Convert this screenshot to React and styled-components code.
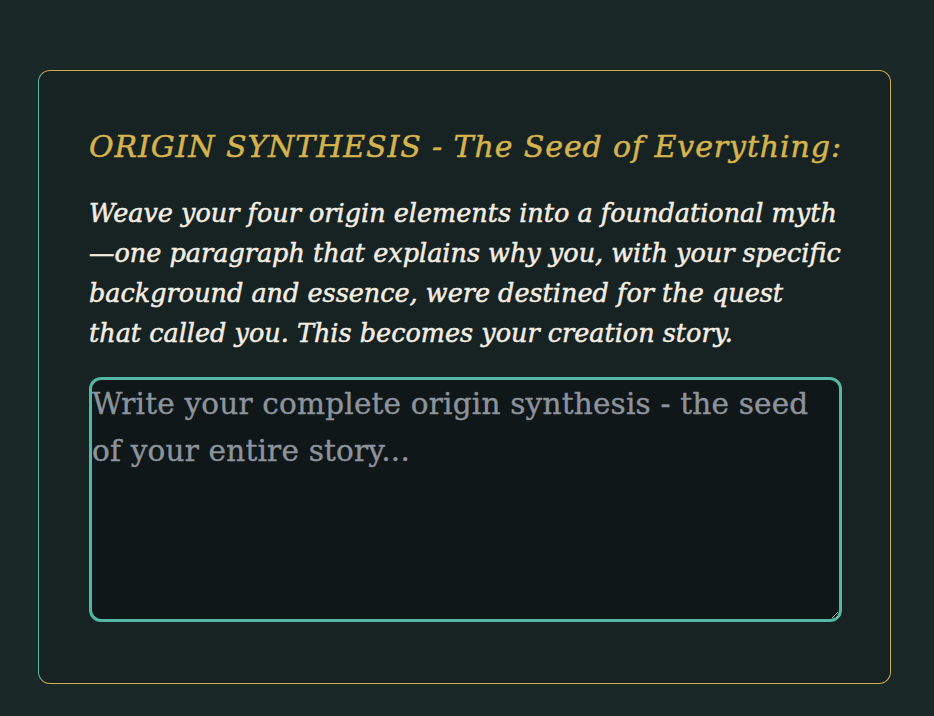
import React from 'react';
import styled, { createGlobalStyle } from 'styled-components';

const GlobalStyle = createGlobalStyle`
  html, body {
    margin: 0;
    padding: 0;
    background: #1a2828;
  }
  body {
    font-family: 'DejaVu Serif', serif;
  }
`;

const Page = styled.div`
  min-height: 716px;
  box-sizing: border-box;
  padding: 70px 43px 32px 38px;
`;

const Card = styled.section`
  background: #172323;
  border: 1px solid #cfae4c;
  border-left-color: #52b8a4;
  border-radius: 12px;
  padding: 55px 48px 61px 50px;
`;

const Title = styled.h2`
  margin: 0 0 25px;
  font-family: 'DejaVu Serif', serif;
  font-style: italic;
  font-weight: normal;
  font-size: 30px;
  line-height: 42px;
  letter-spacing: 0.9px;
  white-space: nowrap;
  color: #d6b44d;
  -webkit-text-stroke: 0.5px #d6b44d;
`;

const Prompt = styled.p`
  margin: 0 0 24px;
  font-style: italic;
  font-size: 25.5px;
  line-height: 40px;
  color: #f4ede2;
  -webkit-text-stroke: 0.5px #f4ede2;
`;

const Answer = styled.textarea`
  display: block;
  box-sizing: border-box;
  width: 100%;
  height: 245px;
  padding: 1px 0 0;
  background: #0f1718;
  border: 3px solid #52b8a4;
  border-radius: 12px;
  outline: none;
  font-family: 'DejaVu Serif', serif;
  font-size: 29.5px;
  line-height: 47px;
  letter-spacing: 0.2px;
  color: #e8e4dc;
  resize: vertical;

  &::placeholder {
    color: #8d939c;
    -webkit-text-stroke: 0.4px #8d939c;
  }
`;

export default function App() {
  return (
    <>
      <GlobalStyle />
      <Page>
        <Card>
          <Title>ORIGIN SYNTHESIS - The Seed of Everything:</Title>
          <Prompt>
            Weave your four origin elements into a foundational myth—one paragraph that explains why you, with your
            specific background and essence, were destined for the quest that called you. This becomes your creation
            story.
          </Prompt>
          <Answer placeholder="Write your complete origin synthesis - the seed of your entire story..." />
        </Card>
      </Page>
    </>
  );
}
